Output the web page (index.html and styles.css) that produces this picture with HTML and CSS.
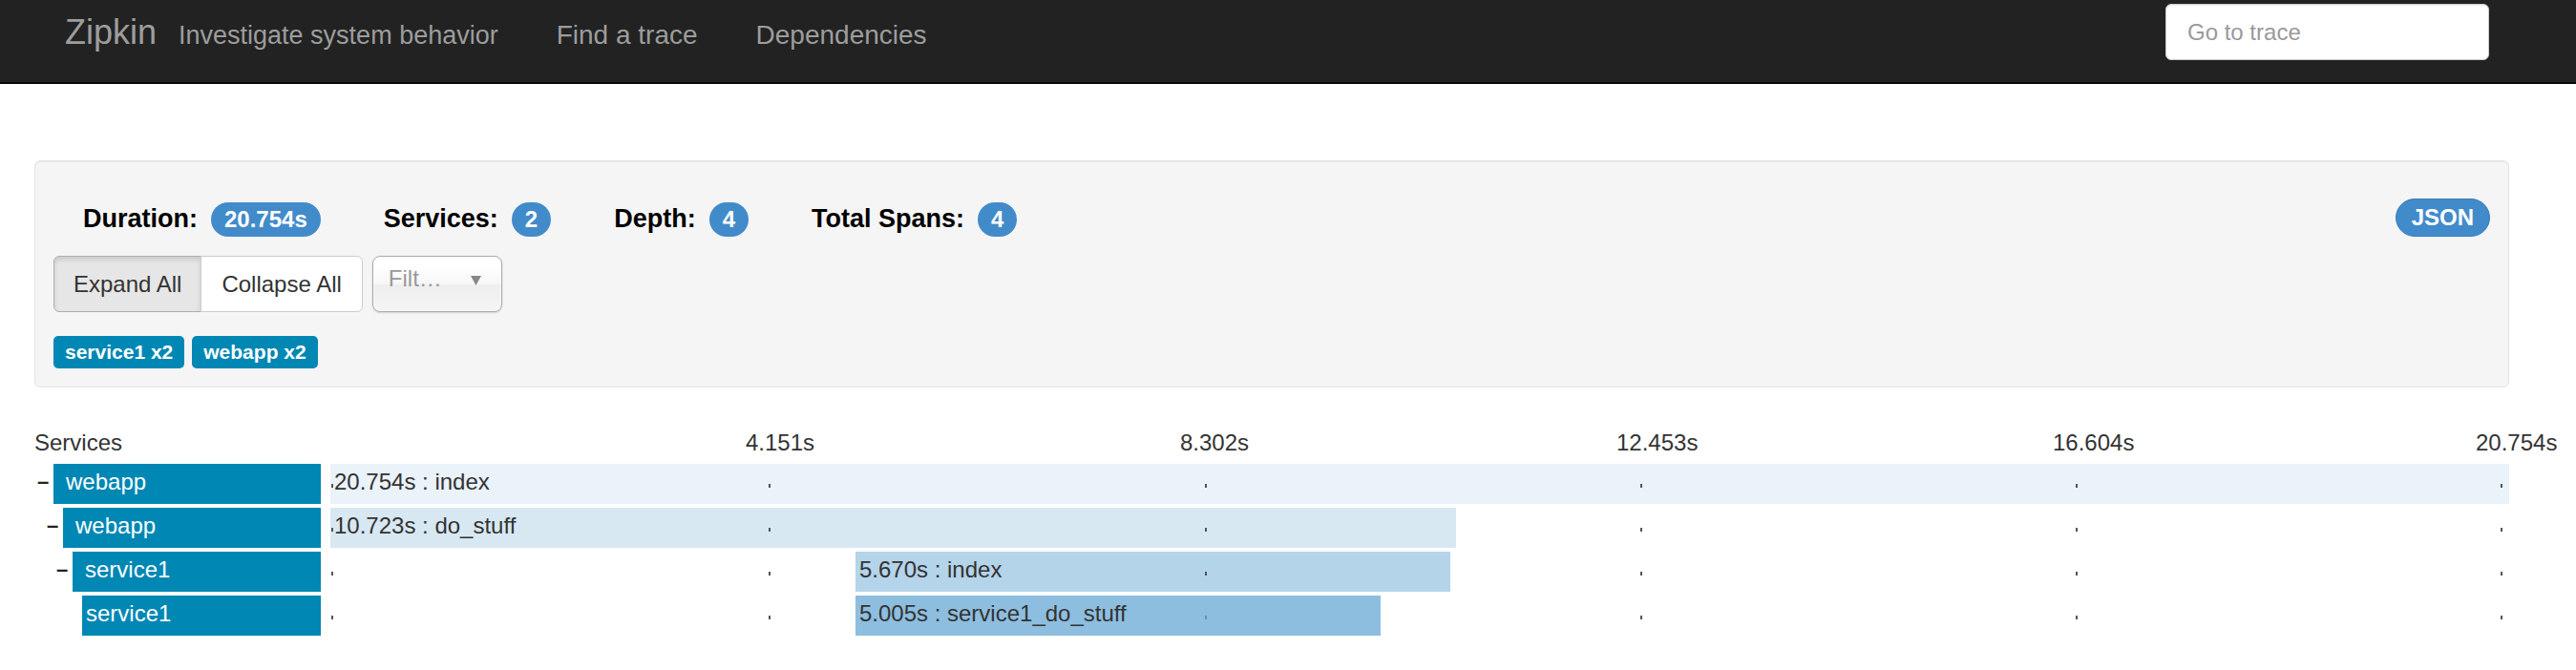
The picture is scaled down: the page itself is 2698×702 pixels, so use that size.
FILE: index.html
```html
<!DOCTYPE html>
<html lang="en">
<head>
<meta charset="utf-8">
<title>Zipkin - Trace</title>
<link rel="stylesheet" href="styles.css">
</head>
<body>
<nav class="navbar">
  <div class="nav-left">
    <a class="brand" href="#">Zipkin</a>
    <span class="tagline">Investigate system behavior</span>
    <a class="nav-link" href="#">Find a trace</a>
    <a class="nav-link" href="#">Dependencies</a>
  </div>
  <input class="goto" type="text" placeholder="Go to trace">
</nav>
<main class="container">
  <section class="panel">
    <div class="details-row">
      <ul class="details">
        <li><strong>Duration:</strong><span class="badge">20.754s</span></li>
        <li><strong>Services:</strong><span class="badge">2</span></li>
        <li><strong>Depth:</strong><span class="badge">4</span></li>
        <li><strong>Total Spans:</strong><span class="badge">4</span></li>
      </ul>
      <button class="json" type="button">JSON</button>
    </div>
    <div class="controls">
      <div class="btn-group">
        <button class="btn active" type="button">Expand All</button>
        <button class="btn btn-last" type="button">Collapse All</button>
      </div>
      <div class="chosen">
        <span class="chosen-text">Filt…</span>
        <svg class="chosen-arrow" width="11" height="10" viewBox="0 0 11 10"><polygon points="0,0 11,0 5.5,10" fill="#888"/></svg>
      </div>
    </div>
    <div class="tags">
      <span class="tag">service1 x2</span>
      <span class="tag">webapp x2</span>
    </div>
  </section>

  <section class="timeline">
    <div class="timeline-header">
      <span class="services-title">Services</span>
      <span class="marker" style="left:745px">4.151s</span>
      <span class="marker" style="left:1200px">8.302s</span>
      <span class="marker" style="left:1657px">12.453s</span>
      <span class="marker" style="left:2114px">16.604s</span>
      <span class="marker" style="left:2557px">20.754s</span>
    </div>

    <div class="span-row">
      <div class="service-col depth-0">
        <span class="expander">–</span>
        <span class="service-name parent">webapp</span>
      </div>
      <div class="span-track">
        <div class="span-bar level-1" style="margin-left:0%;width:100%">20.754s : index</div>
        <i class="tick" style="left:1px"></i><i class="tick" style="left:459px"></i><i class="tick" style="left:916px"></i><i class="tick" style="left:1372px"></i><i class="tick" style="left:1828px"></i><i class="tick" style="left:2273px"></i>
      </div>
    </div>

    <div class="span-row">
      <div class="service-col depth-1">
        <span class="expander">–</span>
        <span class="service-name parent">webapp</span>
      </div>
      <div class="span-track">
        <div class="span-bar level-2" style="margin-left:0%;width:51.67%">10.723s : do_stuff</div>
        <i class="tick" style="left:1px"></i><i class="tick" style="left:459px"></i><i class="tick" style="left:916px"></i><i class="tick" style="left:1372px"></i><i class="tick" style="left:1828px"></i><i class="tick" style="left:2273px"></i>
      </div>
    </div>

    <div class="span-row">
      <div class="service-col depth-2">
        <span class="expander">–</span>
        <span class="service-name parent">service1</span>
      </div>
      <div class="span-track">
        <div class="span-bar level-3" style="margin-left:24.1%;width:27.32%">5.670s : index</div>
        <i class="tick" style="left:1px"></i><i class="tick" style="left:459px"></i><i class="tick" style="left:916px"></i><i class="tick" style="left:1372px"></i><i class="tick" style="left:1828px"></i><i class="tick" style="left:2273px"></i>
      </div>
    </div>

    <div class="span-row">
      <div class="service-col depth-3">
        <span class="expander"></span>
        <span class="service-name leaf">service1</span>
      </div>
      <div class="span-track">
        <div class="span-bar level-4" style="margin-left:24.1%;width:24.12%">5.005s : service1_do_stuff</div>
        <i class="tick" style="left:1px"></i><i class="tick" style="left:459px"></i><i class="tick tick-light" style="left:916px"></i><i class="tick" style="left:1372px"></i><i class="tick" style="left:1828px"></i><i class="tick" style="left:2273px"></i>
      </div>
    </div>
  </section>
</main>
</body>
</html>
```

FILE: styles.css
```css
* { box-sizing: border-box; }
html, body { margin: 0; padding: 0; }
body {
  font-family: "Liberation Sans", Arial, Helvetica, sans-serif;
  color: #333;
  background: #fff;
  width: 2698px;
}

/* ---------- navbar ---------- */
.navbar {
  display: flex;
  align-items: flex-start;
  height: 88px;
  background: #222;
  border-bottom: 2px solid #080808;
}
.nav-left {
  display: flex;
  align-items: baseline;
  padding: 16px 0 0 68px;
}
.brand {
  font-size: 36px;
  line-height: 36px;
  color: #9d9d9d;
  text-decoration: none;
}
.tagline {
  font-size: 27px;
  line-height: 27px;
  color: #9d9d9d;
  margin-left: 23px;
}
.nav-link {
  font-size: 28px;
  line-height: 28px;
  color: #9d9d9d;
  text-decoration: none;
  margin-left: 61px;
}
.goto {
  margin: 4px 91px 0 auto;
  width: 339px;
  height: 59px;
  border: 1px solid #ccc;
  border-radius: 6px;
  padding: 0 22px;
  font-family: "Liberation Sans", Arial, Helvetica, sans-serif;
  font-size: 24px;
  color: #555;
  background: #fff;
  box-shadow: inset 0 1px 1px rgba(0, 0, 0, 0.075);
  outline: none;
}
.goto::placeholder { color: #999; }

/* ---------- container ---------- */
.container {
  width: 2628px;
  padding-left: 36px;
}

/* ---------- summary panel ---------- */
.panel {
  margin-top: 80px;
  background: #f5f5f5;
  border: 1px solid #e3e3e3;
  border-radius: 6px;
  box-shadow: inset 0 1px 1px rgba(0, 0, 0, 0.05);
  padding: 39px 19px 19px 19px;
}
.details-row {
  display: flex;
  align-items: flex-end;
  justify-content: space-between;
  height: 40px;
}
.details {
  display: flex;
  gap: 66px;
  list-style: none;
  margin: 0;
  padding: 0 0 0 31px;
}
.details li {
  display: flex;
  align-items: baseline;
  gap: 14px;
}
.details strong {
  font-size: 27px;
  line-height: 36px;
  font-weight: bold;
  color: #000;
}
.badge {
  display: inline-block;
  height: 36px;
  line-height: 36px;
  padding: 0 14px;
  border-radius: 18px;
  background: #428bca;
  color: #fff;
  font-size: 24px;
  font-weight: bold;
}
.json {
  height: 40px;
  line-height: 38px;
  padding: 0 16px;
  border: 1px solid #357ebd;
  border-radius: 20px;
  background: #428bca;
  color: #fff;
  font-family: "Liberation Sans", Arial, Helvetica, sans-serif;
  font-size: 24px;
  font-weight: bold;
}

.controls {
  display: flex;
  margin-top: 20px;
}
.btn-group { display: flex; }
.btn {
  height: 59px;
  line-height: 57px;
  padding: 0 21px 0 21px;
  border: 1px solid #ccc;
  background: #fff;
  color: #333;
  font-family: "Liberation Sans", Arial, Helvetica, sans-serif;
  font-size: 24px;
  border-radius: 0 6px 6px 0;
}
.btn.active {
  padding: 0 20px;
  background: #e6e6e6;
  border-color: #adadad;
  border-radius: 6px 0 0 6px;
  box-shadow: inset 0 3px 5px rgba(0, 0, 0, 0.125);
}
.btn-last { margin-left: -1px; }

.chosen {
  display: flex;
  align-items: flex-start;
  margin-left: 10px;
  width: 136px;
  height: 59px;
  border: 1px solid #aaa;
  border-radius: 8px;
  padding-left: 16px;
  background: linear-gradient(#fff 20%, #f6f6f6 50%, #eee 52%, #f4f4f4 100%);
  box-shadow: inset 0 0 3px #fff, 0 1px 2px rgba(0, 0, 0, 0.15);
}
.chosen-text {
  font-size: 24px;
  line-height: 45px;
  color: #999;
}
.chosen-arrow {
  margin: 20px 21px 0 auto;
  flex: none;
}

.tags {
  display: flex;
  gap: 8px;
  margin-top: 25px;
}
.tag {
  height: 34px;
  line-height: 34px;
  padding: 0 12px;
  border-radius: 5px;
  background: #0087b4;
  color: #fff;
  font-size: 21px;
  font-weight: bold;
}

/* ---------- timeline ---------- */
.timeline { margin-top: 43px; }
.timeline-header {
  position: relative;
  height: 30px;
  line-height: 30px;
  font-size: 24px;
  color: #333;
  margin-bottom: 7px;
}
.marker {
  position: absolute;
  top: 0;
  white-space: nowrap;
}

.span-row {
  display: flex;
  gap: 10px;
  height: 42px;
  margin-bottom: 4px;
}
.service-col {
  display: flex;
  width: 300px;
  flex: none;
}
.depth-1 { padding-left: 10px; }
.depth-2 { padding-left: 20px; }
.depth-3 { padding-left: 30px; }
.expander {
  width: 20px;
  flex: none;
  padding-left: 3px;
  font-size: 22px;
  font-weight: bold;
  line-height: 38px;
  color: #222;
}
.service-name {
  flex: 1;
  background: #0087b4;
  color: #fff;
  font-size: 24px;
  line-height: 38px;
  white-space: nowrap;
}
.service-name.parent { padding-left: 13px; }
.service-name.leaf { padding-left: 4px; }

.span-track {
  position: relative;
  flex: 1;
  display: flex;
}
.span-bar {
  height: 42px;
  line-height: 38px;
  padding-left: 4px;
  font-size: 24px;
  color: #333;
  white-space: nowrap;
}
.level-1 { background: #eaf2fa; }
.level-2 { background: #d8e8f3; }
.level-3 { background: #b4d4ea; }
.level-4 { background: #8ebedf; }

.tick {
  position: absolute;
  top: 21px;
  width: 2px;
  height: 4px;
  background: #555;
}
.tick-light { background: #6a8ea8; }
```
